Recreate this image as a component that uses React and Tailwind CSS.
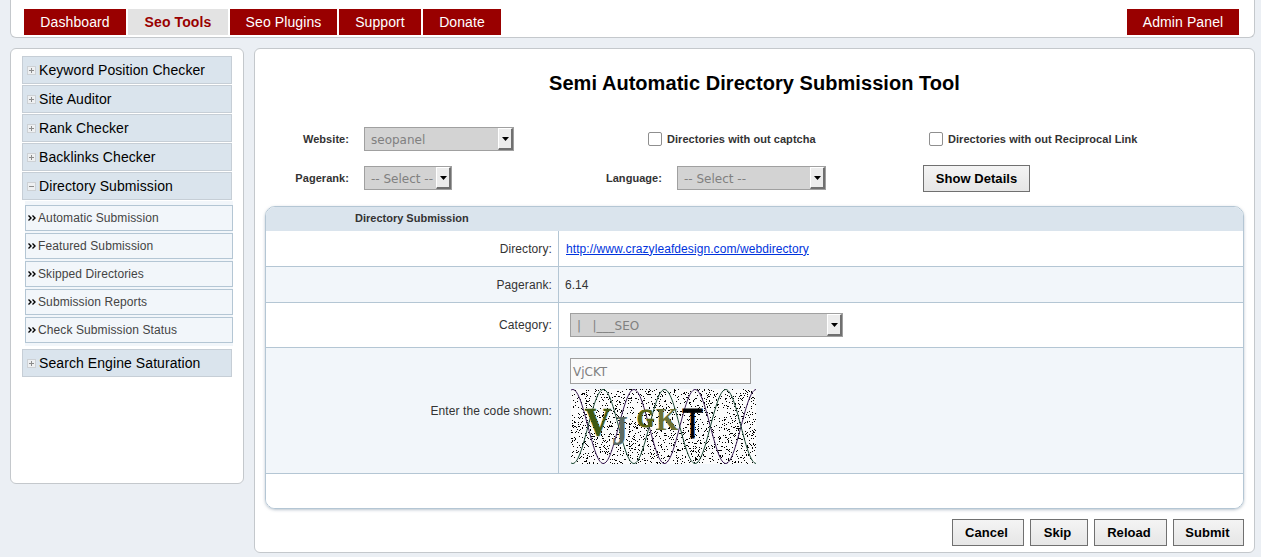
import React from 'react';

const tabs = [
  { name: 'Dashboard', width: 'w-[102px]' },
  { name: 'Seo Tools', width: 'w-[100px]', active: true },
  { name: 'Seo Plugins', width: 'w-[107px]' },
  { name: 'Support', width: 'w-[82px]' },
  { name: 'Donate', width: 'w-[78px]' },
];

const subLinks = [
  'Automatic Submission',
  'Featured Submission',
  'Skipped Directories',
  'Submission Reports',
  'Check Submission Status',
];

const ToggleIcon = ({ open }) => (
  <svg width="9" height="9" viewBox="0 0 9 9" className="shrink-0 mr-[3px]">
    <rect x="0.5" y="0.5" width="8" height="8" fill="#eef0f2" stroke="#cdd1d5" strokeWidth="1" />
    <path d={open ? 'M2 4.5h5' : 'M2 4.5h5M4.5 2v5'} stroke="#8c8c8c" strokeWidth="1" fill="none" />
  </svg>
);

const MenuItem = ({ label, open }) => (
  <div className="h-[28px] flex items-center pl-[4px] bg-[#dae4ed] border border-[#c6ced6] text-[14px] tracking-[0.08px] text-black">
    <ToggleIcon open={open} />
    <span>{label}</span>
  </div>
);

const FakeSelect = ({ value, width }) => (
  <div className={`${width} h-[24px] flex bg-[#d3d3d3] border border-[#a0a0a0] font-['DejaVu_Sans',sans-serif] font-normal text-[12px] tracking-normal text-[#808080]`}>
    <span className="flex-1 pl-[6px] leading-[24px] whitespace-pre overflow-hidden">{value}</span>
    <span className="w-[15px] flex items-center justify-center bg-[#ececec] border-t border-l border-white border-r-2 border-b-2 border-r-[#707070] border-b-[#707070]">
      <svg width="7" height="4" viewBox="0 0 7 4"><path d="M0 0h7L3.5 4z" fill="#000" /></svg>
    </span>
  </div>
);

const Checkbox = () => (
  <span className="inline-block w-[14px] h-[14px] rounded-[2px] bg-white border border-[#8f8f8f]" />
);

const ActionButton = ({ label, width, className = '' }) => (
  <button className={`${width} ${className} h-[27px] pt-px border border-[#707070] bg-gradient-to-b from-[#f4f4f4] to-[#e6e6e6] text-[13px] font-bold tracking-[0.05px] text-black`}>
    {label}
  </button>
);

// noise for the captcha, fixed seed so it stays the same on every load
const makeNoise = () => {
  const dots = [];
  let seed = 1234;
  const next = () => {
    seed = (seed + 0x6d2b79f5) | 0;
    let t = Math.imul(seed ^ (seed >>> 15), 1 | seed);
    t = (t + Math.imul(t ^ (t >>> 7), 61 | t)) ^ t;
    return ((t ^ (t >>> 14)) >>> 0) / 4294967296;
  };
  for (let i = 0; i < 1700; i++) {
    dots.push([Math.floor(next() * 185), Math.floor(next() * 75)]);
  }
  return dots;
};

const makeWave = (sign, color) => {
  let d = '';
  for (let x = 0; x <= 185; x += 1) {
    const y = 37.5 + sign * 37 * Math.sin(((x - 17) * Math.PI) / 30.6);
    d += `${x === 0 ? 'M' : 'L'}${x} ${y.toFixed(1)}`;
  }
  return <path key={sign} d={d} stroke={color} strokeWidth="1" fill="none" />;
};

const noise = makeNoise();

const Captcha = () => (
  <svg width="185" height="75" viewBox="0 0 185 75" className="block">
    <rect width="185" height="75" fill="#fbfbfb" />
    {noise.map(([x, y], i) => (
      <rect key={i} x={x} y={y} width="1" height="1" fill="#000" />
    ))}
    {makeWave(1, '#3a1c55')}
    {makeWave(-1, '#1c4a36')}
    <g fontFamily="'Liberation Serif', serif" fontWeight="bold">
      <text x="0" y="0" fontSize="41" fill="#3f5a12" stroke="#3f5a12" strokeWidth="0.6" transform="translate(14 46) scale(0.88 1)">V</text>
      <text x="0" y="0" fontSize="42" fill="#5c6a62" transform="translate(41 56) scale(0.75 1)">J</text>
      <text x="0" y="0" fontSize="26" fill="#56620f" stroke="#56620f" strokeWidth="1" transform="translate(66 38) scale(0.85 1)">G</text>
      <text x="0" y="0" fontSize="32" fill="#6a7034" transform="translate(85 41) scale(0.9 1)">K</text>
      <text x="0" y="0" fontSize="42" fontFamily="'Liberation Sans', sans-serif" fontWeight="normal" fill="#000" stroke="#000" strokeWidth="0.8" transform="translate(111 49) scale(0.82 1)">T</text>
    </g>
  </svg>
);

const Row = ({ label, alt, height, children }) => (
  <div className={`flex border-b border-[#b4c6d4] ${height} ${alt ? 'bg-[#f2f6fa]' : 'bg-white'}`}>
    <div className="w-[293px] shrink-0 flex items-center justify-end pr-[6px] border-r border-[#b4c6d4] text-[12px] tracking-[0.1px] text-[#333]">
      {label}
    </div>
    <div className="flex-1 pl-[7px] flex items-center text-[12px] text-[#333]">{children}</div>
  </div>
);

export default function App() {
  return (
    <div className="min-h-screen bg-[#ebeff4] pl-[10px] pr-[6px] pb-[4px] font-['Liberation_Sans',Arial,sans-serif]">
      {/* top nav */}
      <div className="h-[38px] bg-white border-x border-b border-[#c4c8cc] rounded-b-[6px] pt-[9px] pl-[13px] pr-[15px] flex justify-between">
        <div className="flex gap-[2px]">
          {tabs.map((tab) => (
            <a
              key={tab.name}
              className={`${tab.width} h-[26px] flex items-center justify-center text-[14px] tracking-[0.1px] ${
                tab.active ? 'bg-[#e3e3e3] text-[#990000] font-bold' : 'bg-[#990000] text-white'
              }`}
            >
              {tab.name}
            </a>
          ))}
        </div>
        <a className="w-[112px] h-[26px] flex items-center justify-center bg-[#990000] text-white text-[14px] tracking-[0.1px]">
          Admin Panel
        </a>
      </div>

      <div className="flex gap-[10px] mt-[10px] items-start">
        {/* sidebar */}
        <div className="w-[234px] h-[436px] shrink-0 bg-white border border-[#c4c8cc] rounded-[6px] pt-[7px] pl-[11px] pr-[11px]">
          <div className="flex flex-col gap-[1px]">
            <MenuItem label="Keyword Position Checker" />
            <MenuItem label="Site Auditor" />
            <MenuItem label="Rank Checker" />
            <MenuItem label="Backlinks Checker" />
            <MenuItem label="Directory Submission" open />
          </div>
          <div className="ml-[3px] mr-[-1px] bg-[#f2f6fa] pt-[4px] pb-[3px] mt-[1px] mb-[3px] flex flex-col gap-[2px]">
            {subLinks.map((link) => (
              <div key={link} className="h-[26px] flex items-center pl-[2px] border border-[#b4c6d4] bg-[#f2f6fa] text-[12px] tracking-[0.1px] text-[#444]">
                <svg width="8" height="6" viewBox="0 0 8 6" className="shrink-0 mr-[2px]">
                  <path d="M0.5 0.5L3 3L0.5 5.5M4.5 0.5L7 3L4.5 5.5" stroke="#000" strokeWidth="1.4" fill="none" />
                </svg>
                <span>{link}</span>
              </div>
            ))}
          </div>
          <MenuItem label="Search Engine Saturation" />
        </div>

        {/* main panel */}
        <div className="flex-1 h-[505px] bg-white border border-[#c4c8cc] rounded-[6px] px-[10px]">
          <h1 className="text-[20px] font-bold text-black text-center tracking-[0.05px] mt-[22px] leading-[24px]">
            Semi Automatic Directory Submission Tool
          </h1>

          <div className="mt-[32px] flex items-center h-[24px] text-[11px] font-bold tracking-[0.05px] text-[#333]">
            <span className="w-[84px] text-right mr-[15px]">Website:</span>
            <FakeSelect value="seopanel" width="w-[150px]" />
            <span className="ml-[134px] mr-[5px] flex"><Checkbox /></span>
            <span className="w-[262px]">Directories with out captcha</span>
            <span className="mr-[5px] flex"><Checkbox /></span>
            <span>Directories with out Reciprocal Link</span>
          </div>

          <div className="mt-[15px] flex items-center h-[24px] text-[11px] font-bold tracking-[0.05px] text-[#333]">
            <span className="w-[84px] text-right mr-[15px]">Pagerank:</span>
            <FakeSelect value="-- Select --" width="w-[88px]" />
            <span className="w-[210px] text-right mr-[15px]">Language:</span>
            <FakeSelect value="-- Select --" width="w-[149px]" />
            <span className="ml-[97px]"><ActionButton label="Show Details" width="w-[107px]" /></span>
          </div>

          <div className="mt-[16px] border border-[#b4c6d4] rounded-[10px] overflow-hidden shadow-[0_1px_3px_rgba(120,140,160,0.5)]">
            <div className="h-[24px] pb-[2px] bg-[#dae4ed] flex items-center pl-[89px] text-[11px] font-bold text-[#333]">
              Directory Submission
            </div>
            <Row label="Directory:" height="h-[36px]">
              <a className="text-[12px] tracking-[0.08px] text-[#0033dd] underline">http://www.crazyleafdesign.com/webdirectory</a>
            </Row>
            <Row label="Pagerank:" height="h-[36px]" alt>
              <span className="-ml-[1px]">6.14</span>
            </Row>
            <Row label="Category:" height="h-[45px]">
              <span className="ml-[4px]"><FakeSelect value="|   |___SEO" width="w-[273px]" /></span>
            </Row>
            <Row label="Enter the code shown:" height="h-[126px]" alt>
              <div className="ml-[4px] flex flex-col gap-[5px]">
                <div className="w-[181px] h-[26px] bg-[#fafafa] border border-[#a0a0a0] pl-[2px] font-['DejaVu_Sans',sans-serif] text-[12px] leading-[26px] text-[#808080]">
                  VjCKT
                </div>
                <span className="ml-px"><Captcha /></span>
              </div>
            </Row>
            <div className="h-[34px] bg-white" />
          </div>

          <div className="mt-[10px] flex justify-end gap-[6px]">
            <ActionButton label="Cancel" width="w-[72px]" className="pr-[3px]" />
            <ActionButton label="Skip" width="w-[58px]" className="pr-[3px]" />
            <ActionButton label="Reload" width="w-[73px]" className="pr-[3px]" />
            <ActionButton label="Submit" width="w-[71px]" className="pr-[2px]" />
          </div>
        </div>
      </div>
    </div>
  );
}
